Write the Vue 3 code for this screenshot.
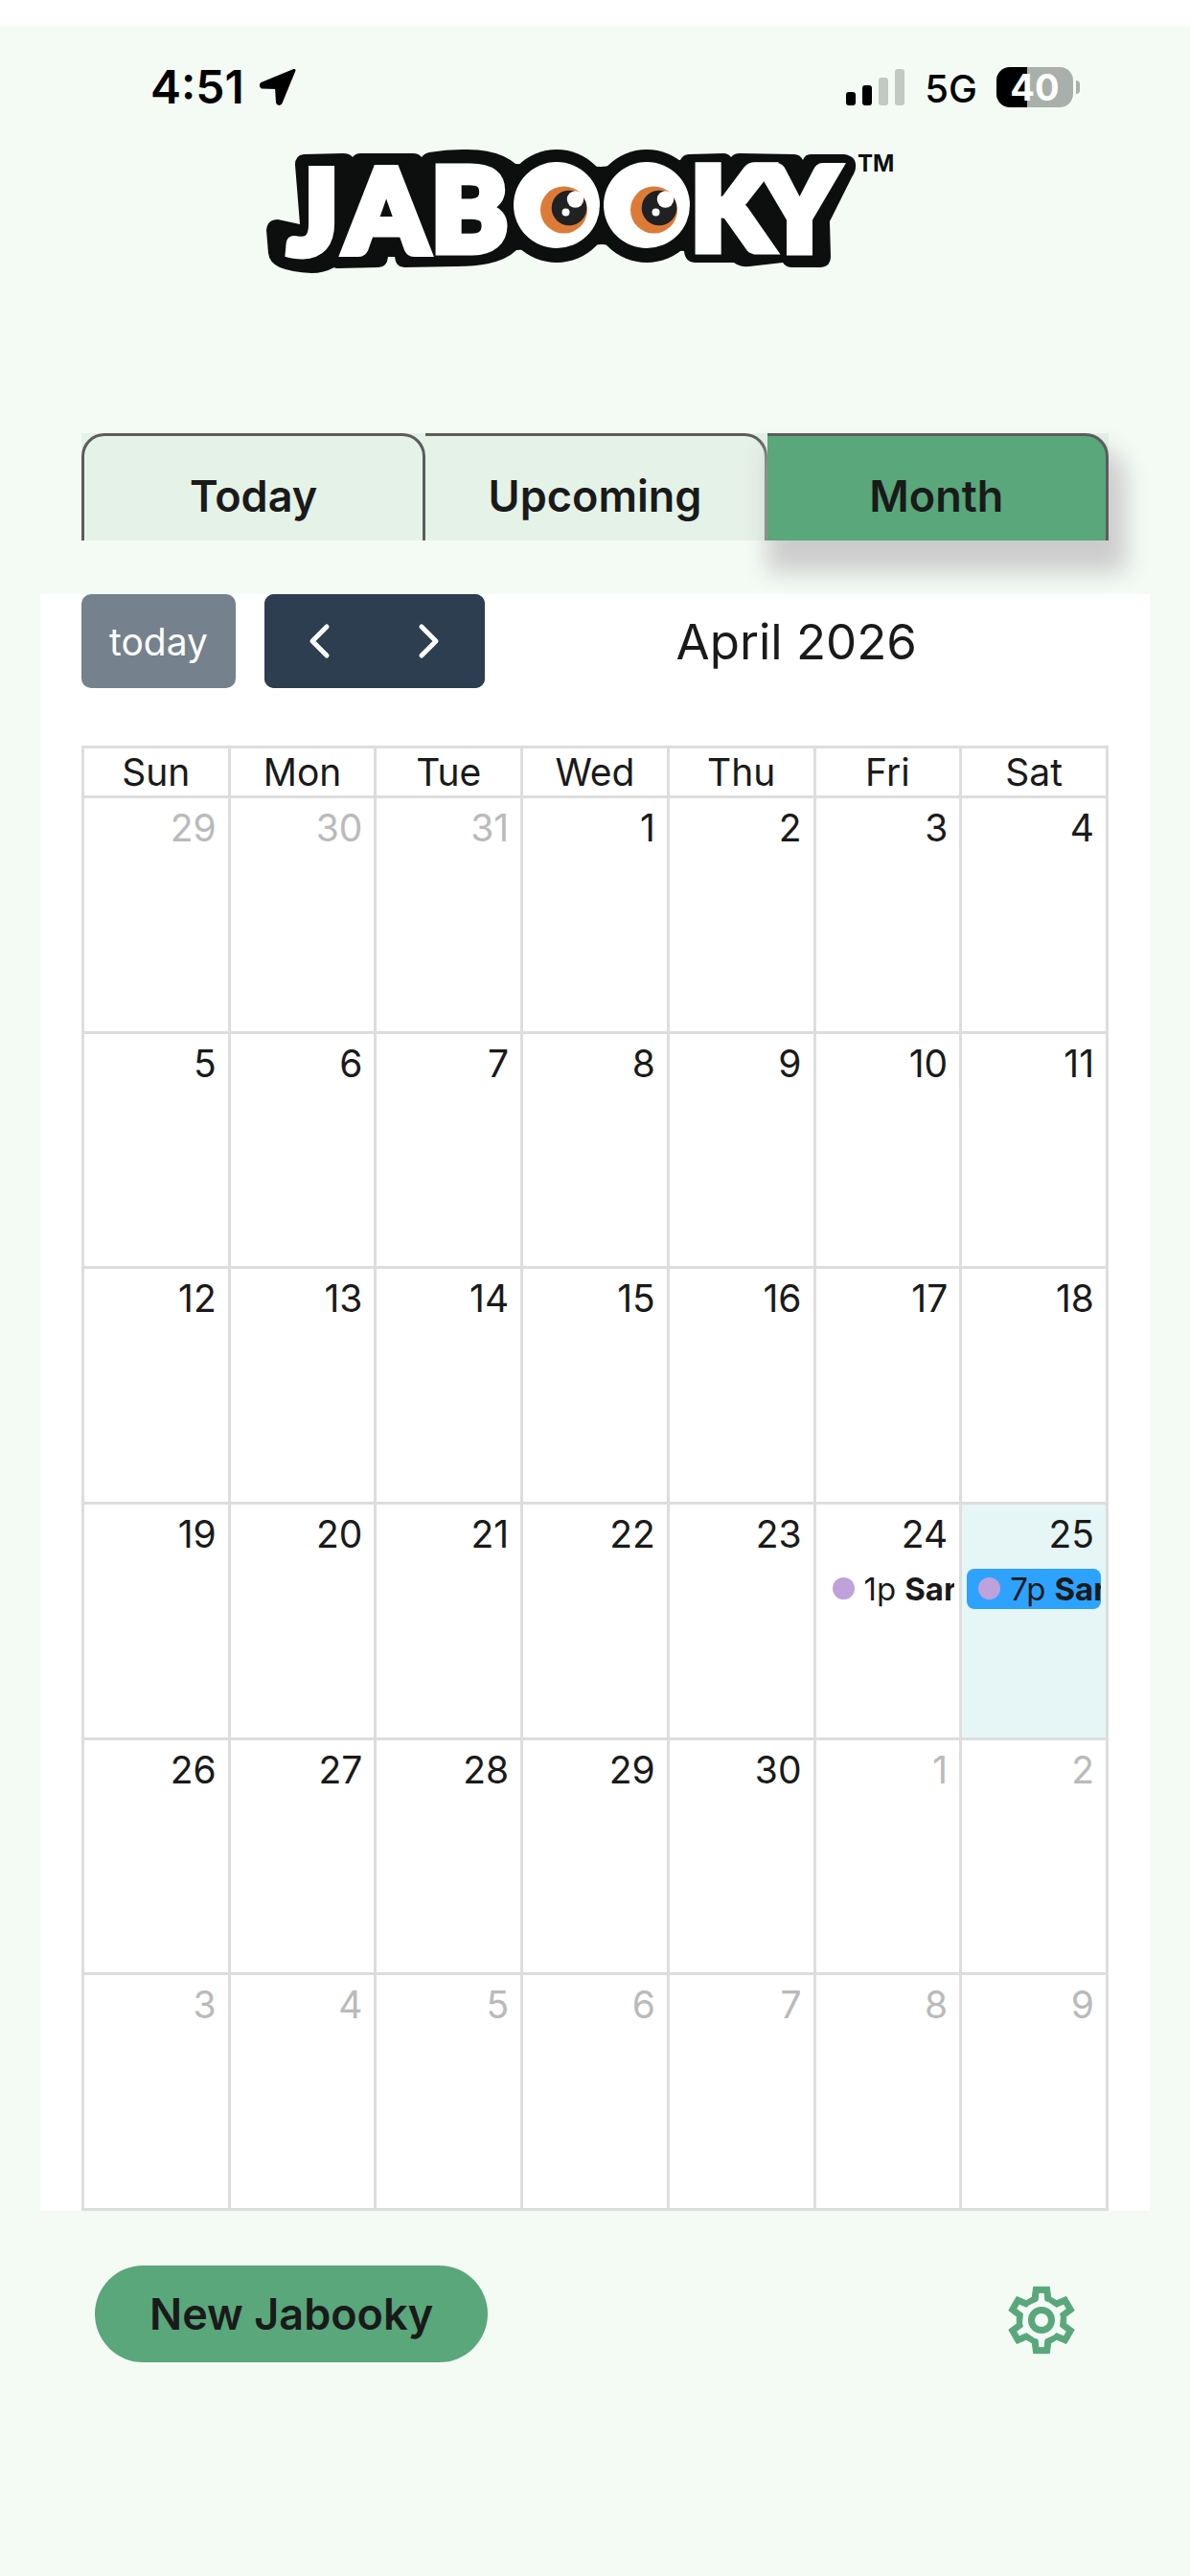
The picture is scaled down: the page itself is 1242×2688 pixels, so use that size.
<template>
  <div class="page">
    <div class="statusbar">
      <div class="clock">
        <span>4:51</span>
        <svg width="40" height="40" viewBox="0 0 40 40">
          <path d="M37 2.500 L3 16.500 Q1.500 18.500 3.500 20 L18.500 20.500 L19.500 36 Q21 38.500 23 36.500 Z" fill="#000" stroke="#000" stroke-width="3" stroke-linejoin="round" />
        </svg>
      </div>
      <div class="indicators">
        <svg class="signal" width="62" height="38" viewBox="0 0 62 38">
          <rect x="0" y="24" width="10" height="14" rx="3" />
          <rect x="17" y="17" width="10" height="21" rx="3" />
          <rect x="34" y="9" width="10" height="29" rx="3" fill="#c3c8c4" />
          <rect x="51" y="0" width="10" height="38" rx="3" fill="#c3c8c4" />
        </svg>
        <span class="network">5G</span>
        <div class="battery"><span>40</span></div>
      </div>
    </div>

    <!-- logo: black backing blob, white letters, eyes in the two Os -->
    <svg class="logo" viewBox="270 150 702 140" role="img" aria-label="Jabooky">
      <path class="backing" d="M308 172 Q308 162 317 161 L358 160 Q365 160 368 164 Q371 160 376 160 L431 160 Q437 160 440 164 Q443 160 448 159 Q465 156 483 156 Q520 155 538 171 L627 174 L710 167 Q713 161 719 161 L755 160 Q760 160 763 164 Q766 160 772 160 L829 161 Q835 161 838 167 Q840 161 846 161 L881 161 Q894 163 893 174 Q893 179 889 185 L866 231 L867 268 Q867 278 857 279 L827 279 Q820 279 817 274 L782 278 Q772 279 766 274 L726 274 Q715 274 714 262 L628 255 L539 261 Q522 278 477 278 L422 279 Q413 279 412 268 L405 268 Q404 279 395 279 L352 280 Q349 280 349 279 Q338 285 325 285 Q304 284 292 279 Q281 274 280 264 L278 240 Q279 229 290 229 L313 234 Z" />
      <ellipse v-for="x in eyes" :key="x" class="backing" :cx="x" cy="215" rx="58" ry="59" />
      <ellipse v-for="x in eyes" :key="x" class="white" :cx="x" cy="214" rx="45" ry="45" />
      <text class="letters" x="301 361 450 539 633 721 795" y="265 264 262 255 255 261 262">JAB<tspan class="o">OO</tspan>KY</text>
      <g v-for="x in eyes" :key="x" :transform="`translate(${x} 214)`">
        <circle cx="6" cy="4" r="32" fill="#fff" />
        <circle cx="7.500" cy="5" r="24.500" fill="#dc7b38" />
        <circle cx="13" cy="3" r="18.300" fill="#1f2123" />
        <circle cx="19.500" cy="-6" r="8.700" fill="#fff" />
        <circle cx="9.500" cy="7.500" r="4" fill="#fff" />
      </g>
      <text class="tm" x="895" y="179">TM</text>
    </svg>

    <nav class="tabs">
      <button
        v-for="t in tabs"
        :key="t"
        type="button"
        class="tab"
        :class="{ active: t === activeTab }"
        @click="activeTab = t"
      >{{ t }}</button>
    </nav>

    <main class="calendar">
      <div class="toolbar">
        <div class="buttons">
          <button type="button" class="btn" :disabled="isCurrentMonth" @click="goToday">today</button>
          <div class="group">
            <button type="button" class="btn arrow" aria-label="Previous month" @click="shift(-1)">
              <svg width="24" height="40" viewBox="0 0 24 40"><path d="M20 5 L5 20 L20 35" /></svg>
            </button>
            <button type="button" class="btn arrow" aria-label="Next month" @click="shift(1)">
              <svg width="24" height="40" viewBox="0 0 24 40"><path d="M4 5 L19 20 L4 35" /></svg>
            </button>
          </div>
        </div>
        <h2 class="month">{{ title }}</h2>
      </div>

      <table class="grid">
        <thead>
          <tr>
            <th v-for="d in weekdays" :key="d" scope="col">{{ d }}</th>
          </tr>
        </thead>
        <tbody>
          <tr v-for="(week, w) in weeks" :key="w">
            <td v-for="day in week" :key="day.key" :class="{ other: day.other, now: day.key === TODAY }">
              <div class="num">{{ day.n }}</div>
              <a
                v-for="e in events[day.key] || []"
                :key="e.time"
                href="#"
                class="event"
                :class="{ selected: e.selected }"
                @click.prevent
              ><i class="dot"></i><span class="time">{{ e.time }}</span><b>{{ e.name }}</b></a>
            </td>
          </tr>
        </tbody>
      </table>
    </main>

    <footer class="actions">
      <button type="button" class="new">New Jabooky</button>
      <button type="button" class="settings" aria-label="Settings">
        <svg width="72" height="72" viewBox="-108 -108 216 216">
          <path :d="gear" fill="#59a77b" fill-rule="evenodd" stroke="#59a77b" stroke-width="3" stroke-linejoin="round" />
          <circle r="31.500" fill="none" stroke="#59a77b" stroke-width="21" />
        </svg>
      </button>
    </footer>
  </div>
</template>

<script setup>
import { ref, computed } from 'vue'

// x centres of the two eyes in the logo
const eyes = [581, 675]

const tabs = ['Today', 'Upcoming', 'Month']
const activeTab = ref('Month')

/* ---- calendar ---- */
const TODAY = '2026-4-25'
const weekdays = ['Sun', 'Mon', 'Tue', 'Wed', 'Thu', 'Fri', 'Sat']
const events = {
  '2026-4-24': [{ time: '1p', name: 'Sar' }],
  '2026-4-25': [{ time: '7p', name: 'Sar', selected: true }],
}
const year = ref(2026)
const month = ref(3)

const title = computed(() =>
  new Date(year.value, month.value, 1).toLocaleDateString('en-US', { month: 'long', year: 'numeric' })
)
const isCurrentMonth = computed(() => year.value === 2026 && month.value === 3)

// always six weeks, starting on the Sunday before the 1st
const weeks = computed(() => {
  const offset = new Date(year.value, month.value, 1).getDay()
  return Array.from({ length: 6 }, (_, w) =>
    Array.from({ length: 7 }, (_, d) => {
      const date = new Date(year.value, month.value, 1 - offset + w * 7 + d)
      return {
        n: date.getDate(),
        other: date.getMonth() !== month.value,
        key: `${date.getFullYear()}-${date.getMonth() + 1}-${date.getDate()}`,
      }
    })
  )
})

function shift(n) {
  const d = new Date(year.value, month.value + n, 1)
  year.value = d.getFullYear()
  month.value = d.getMonth()
}
function goToday() {
  year.value = 2026
  month.value = 3
}

/* ---- gear icon: one tooth repeated six times ---- */
function ring(points) {
  const out = []
  for (let i = 0; i < 6; i++) {
    const a = (i * Math.PI) / 3
    for (const [x, y] of points) {
      out.push(`${(x * Math.cos(a) - y * Math.sin(a)).toFixed(1)} ${(x * Math.sin(a) + y * Math.cos(a)).toFixed(1)}`)
    }
  }
  return 'M' + out.join('L') + 'Z'
}
const gear =
  ring([[-29, -72], [-25, -104], [25, -104], [29, -72]]) +
  ring([[-12, -61], [-9, -86], [9, -86], [12, -61], [22, -58]])
</script>

<style>
body { margin: 0; background: #f4fbf5; }
</style>

<style scoped>
.page { min-height: 100vh; box-sizing: border-box; border-top: 27px solid #fff; background: #f4fbf5; color: #1a1a1a; font-family: Inter, 'Liberation Sans', sans-serif; }
button { font-family: inherit; color: inherit; border: none; margin: 0; cursor: pointer; }

.statusbar { display: flex; justify-content: space-between; align-items: center; height: 123px; padding: 4px 122px 0 157px; box-sizing: border-box; color: #000; }
.clock { display: flex; align-items: center; gap: 15px; font-size: 48px; font-weight: 600; }
.indicators { display: flex; align-items: center; }
.network { font-size: 40px; font-weight: 500; margin: 4px 20px 0 20px; }
.battery { position: relative; width: 80px; height: 42px; border-radius: 14px; background: linear-gradient(90deg, #000 40%, #a9afaa 40%); color: #fff; font-size: 38px; font-weight: 700; line-height: 42px; text-align: center; }
.battery::after { content: ''; position: absolute; right: -7px; top: 14px; width: 4px; height: 14px; border-radius: 0 4px 4px 0; background: #a9afaa; }

.logo { display: block; width: 702px; max-width: 100%; margin: 0 auto 162px; overflow: visible; }
.backing { fill: #0d0f0e; }
.white { fill: #fff; }
.letters { font-family: Lato, Inter, sans-serif; font-size: 120px; font-weight: 900; fill: #fff; stroke: #fff; stroke-width: 9px; }
.letters .o { font-size: 104px; stroke-width: 0; }
.tm { font-size: 24px; font-weight: 700; fill: #0d0f0e; }

.tabs { display: flex; margin: 0 85px 56px; background: #e5f2e8; }
.tab { flex: 1 1 0; height: 112px; padding: 15px 0 0; background: #e5f2e8; border: solid #5c5c5c; border-width: 3px 3px 0 0; border-radius: 0 24px 0 0; font-size: 45px; font-weight: 600; }
.tab:first-child { border-left-width: 3px; border-radius: 24px 24px 0 0; }
.tab.active { position: relative; background: #59a77b; box-shadow: 9px 24px 24px 9px #ccc; }

.calendar { margin: 0 42px; padding: 0 43px; background: #fff; }
.toolbar { display: flex; align-items: center; justify-content: space-between; margin-bottom: 60px; }
.buttons { display: flex; gap: 30px; }
.btn { height: 98px; padding: 0 29px; background: #2c3e50; color: #fff; border-radius: 10px; font-size: 39px; }
.btn:disabled { opacity: .65; cursor: default; }
.group { display: flex; border-radius: 10px; background: #2c3e50; }
.arrow { display: flex; align-items: center; justify-content: center; width: 115px; }
.arrow path { fill: none; stroke: #fff; stroke-width: 5; stroke-linecap: round; stroke-linejoin: round; }
.month { margin: 0 200px 0 0; font-size: 51px; font-weight: 400; }

.grid { width: 100%; height: 1529px; border-collapse: collapse; table-layout: fixed; font-size: 39px; }
.grid th, .grid td { border: 3px solid #ddd; padding: 0; }
.grid th { height: 49px; font-weight: 400; line-height: 48px; }
.grid td { height: 242px; vertical-align: top; }
.num { padding: 7px 12px 0 0; line-height: 48px; text-align: right; }
.other .num { color: #bababa; }
.now { background: #e6f5f5; }
.event { display: flex; align-items: center; height: 42px; margin: 12px 5px 0; padding-left: 12px; overflow: hidden; border-radius: 8px; color: #1a1a1a; font-size: 33px; white-space: nowrap; text-decoration: none; }
.event.selected { background: #2ea2ff; }
.dot { flex: none; width: 23px; height: 23px; margin-right: 10px; border-radius: 50%; background: #bfa1dc; }
.time { margin-right: 9px; }

.actions { display: flex; align-items: center; justify-content: space-between; margin: 57px 119px 0 99px; }
.new { height: 101px; padding: 0 57px; border-radius: 51px; background: #59a77b; font-size: 45px; font-weight: 600; }
.settings { display: flex; padding: 12px 0 0; background: none; }
</style>
